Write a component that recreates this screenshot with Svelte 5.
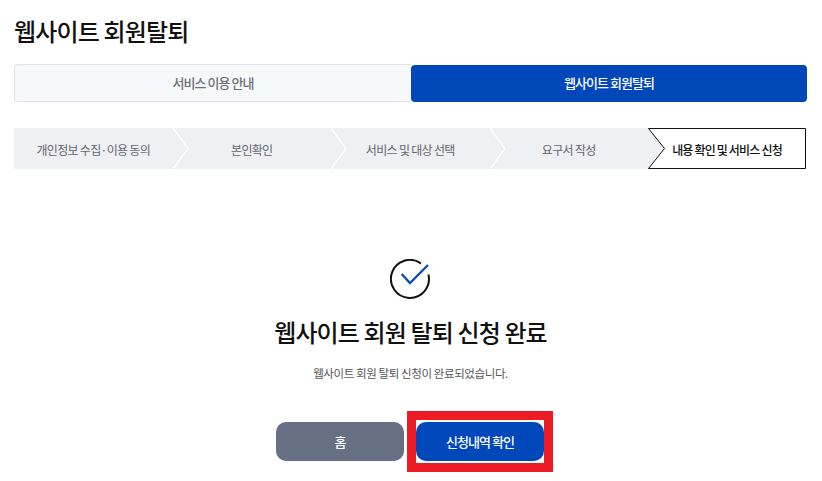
<script>
  const steps = ['개인정보 수집·이용 동의', '본인확인', '서비스 및 대상 선택', '요구서 작성'];
</script>

<main class="page">
  <h1>웹사이트 회원탈퇴</h1>

  <div class="tabs">
    <div class="tab">서비스 이용 안내</div>
    <div class="tab active">웹사이트 회원탈퇴</div>
  </div>

  <ol class="steps">
    {#each steps as s}
      <li class="step">
        <span>{s}</span>
        <svg class="chev" viewBox="0 0 17 41" width="17" height="41" aria-hidden="true">
          <path d="M0 0 L15 20.5 L0 41 Z" fill="#eff0f4" />
          <path d="M0 0 L15 20.5 L0 41" fill="none" stroke="#fff" stroke-width="1.4" />
        </svg>
      </li>
    {/each}
    <li class="step current">
      <svg class="frame" viewBox="0 0 158 41" width="158" height="41" aria-hidden="true">
        <path d="M0.5 0.5 H157.5 V40.5 H0.5 L16.5 20.5 Z" fill="#fff" stroke="#111" stroke-width="1" />
      </svg>
      <span>내용 확인 및 서비스 신청</span>
    </li>
  </ol>

  <section class="done">
    <svg class="icon" viewBox="0 0 40 40" width="40" height="40" aria-hidden="true">
      <path d="M31 4.5 A19 19 0 1 0 38.4 15.5" fill="none" stroke="#111" stroke-width="2" />
      <path d="M11.7 15 L20 24 L38 6" fill="none" stroke="#0b4bb8" stroke-width="2.3" />
    </svg>
    <h2>웹사이트 회원 탈퇴 신청 완료</h2>
    <p>웹사이트 회원 탈퇴 신청이 완료되었습니다.</p>
    <div class="actions">
      <button class="btn gray">홈</button>
      <button class="btn blue">신청내역 확인</button>
    </div>
  </section>
</main>

<style>
  :global(body) {
    margin: 0;
    background: #fff;
    font-family: "Noto Sans CJK KR", "Noto Sans", sans-serif;
  }
  .page {
    width: 793px;
    padding: 13px 0 0 14px;
    height: 468px;
    overflow: hidden;
  }
  h1 {
    margin: 0;
    height: 35px;
    font-size: 24px;
    line-height: 35px;
    font-weight: 500;
    letter-spacing: -0.85px;
    color: #111;
  }
  .tabs {
    display: flex;
    margin-top: 16px;
    height: 38px;
  }
  .tab {
    flex: 1;
    display: flex;
    align-items: center;
    justify-content: center;
    padding-bottom: 2px;
    font-size: 13px;
    font-weight: 500;
    letter-spacing: -0.93px;
    color: #6b6f78;
    background: #f7f8fa;
    border: 1px solid #e0e2e7;
    border-right: 0;
    border-radius: 4px 0 0 4px;
    box-sizing: border-box;
  }
  .tab.active {
    flex: 0 0 396px;
    margin-top: 1px;
    color: #fff;
    background: #0048ba;
    border: 0;
    border-radius: 4px;
  }
  .steps {
    display: flex;
    list-style: none;
    margin: 26px 0 0;
    padding: 0;
    height: 41px;
  }
  .step {
    position: relative;
    flex: 0 0 158.5px;
    display: flex;
    align-items: center;
    justify-content: center;
    padding-top: 1px;
    box-sizing: border-box;
    background: #eff0f4;
    font-size: 12px;
    letter-spacing: -0.68px;
    color: #63666e;
  }
  .step span {
    position: relative;
  }
  .chev {
    position: absolute;
    left: 100%;
    top: 0;
    z-index: 1;
  }
  .step.current {
    flex: 0 0 158px;
    color: #111;
    font-weight: 500;
    letter-spacing: -0.82px;
    z-index: 2;
  }
  .frame {
    position: absolute;
    left: 0;
    top: 0;
  }
  .done {
    display: flex;
    flex-direction: column;
    align-items: center;
    margin-top: 90px;
  }
  .icon {
    display: block;
    margin-right: 1px;
  }
  h2 {
    margin: 15px 0 0;
    font-size: 24px;
    line-height: 35px;
    font-weight: 500;
    letter-spacing: -0.87px;
    color: #111;
  }
  p {
    margin: 16px 0 0;
    font-size: 11.5px;
    line-height: 17px;
    letter-spacing: -0.4px;
    color: #555;
  }
  .actions {
    display: flex;
    gap: 12px;
    margin: 40px 1px 0 0;
  }
  .btn {
    width: 128px;
    height: 39px;
    border: 0;
    border-radius: 10px;
    font-family: inherit;
    font-size: 13px;
    font-weight: 500;
    letter-spacing: -0.95px;
    color: #fff;
    padding: 0;
  }
  .gray {
    background: #667085;
  }
  .blue {
    position: relative;
    background: #0048ba;
  }
  .blue::after {
    content: "";
    position: absolute;
    inset: -11px -9px;
    border: 9px solid #ed1c24;
    pointer-events: none;
  }
</style>
